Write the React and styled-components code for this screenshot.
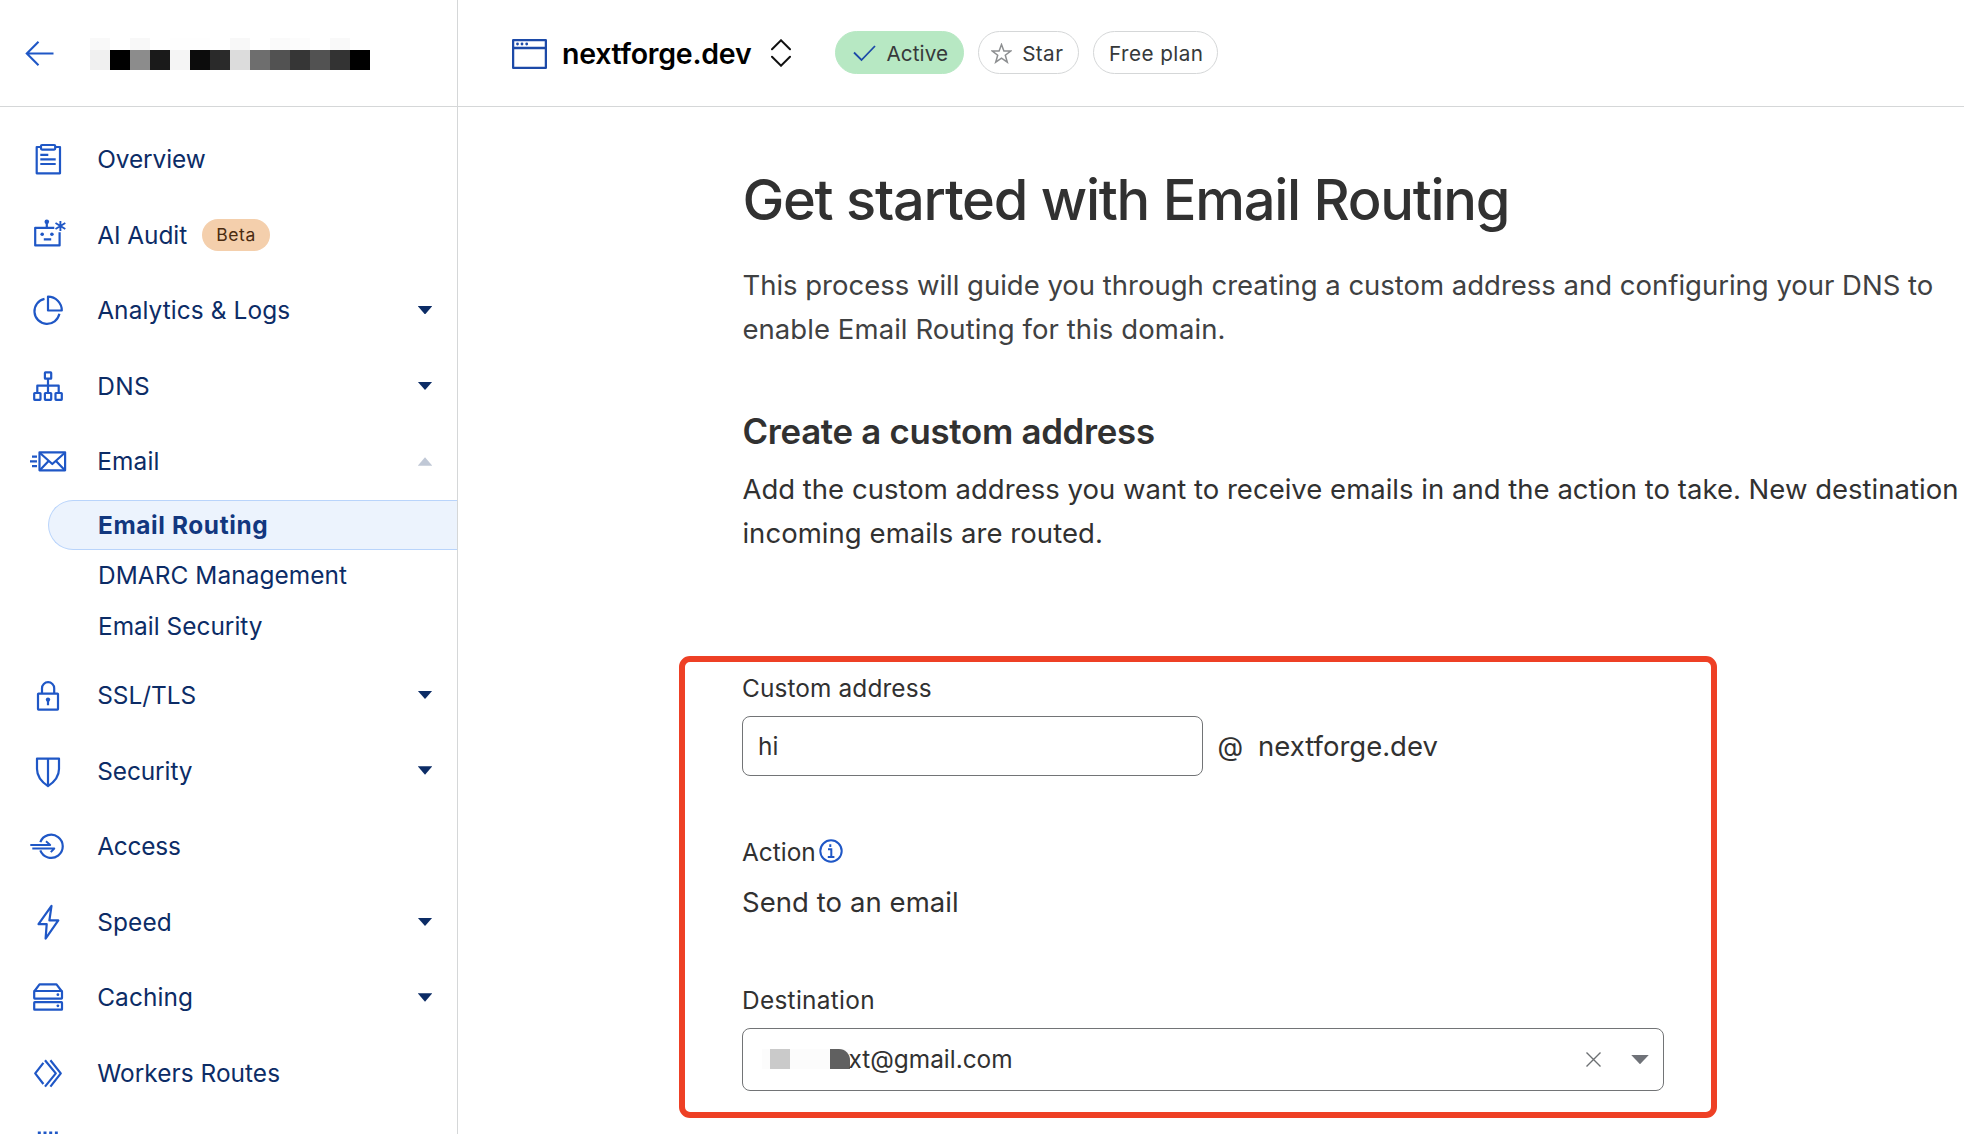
import React from "react";
import styled, { createGlobalStyle } from "styled-components";

const GlobalStyle = createGlobalStyle`
  *, *::before, *::after { box-sizing: border-box; }
  body {
    margin: 0;
    background: #fff;
    font-family: Inter, "Liberation Sans", sans-serif;
    color: #313131;
    overflow: hidden;
  }
  h1, h2, p { margin: 0; }
`;

const Shell = styled.div`
  display: flex;
  width: 1964px;
  height: 1134px;
  overflow: hidden;
`;

/* ---------- sidebar ---------- */

const Sidebar = styled.aside`
  display: flex;
  flex-direction: column;
  flex: 0 0 458px;
  border-right: 1px solid #d5d7d8;
  overflow: hidden;
`;

const AccountBar = styled.div`
  display: flex;
  flex: 0 0 107px;
  align-items: flex-start;
  gap: 36px;
  padding: 37.5px 0 0 24px;
  border-bottom: 1px solid #d5d7d8;
`;

const BackIcon = styled.svg`
  width: 30px;
  height: 30px;
  flex: none;
  fill: none;
  stroke: #1f57c6;
  stroke-width: 2.1;
`;

const Mosaic = styled.div`
  display: grid;
  grid-template-columns: repeat(14, 20px);
  grid-template-rows: 12.5px 20px;
`;

const MosaicCell = styled.span`
  background: ${(p) => p.$tone};
`;

const Nav = styled.nav`
  display: flex;
  flex-direction: column;
  padding-top: 14.1px;
`;

const NavRow = styled.div`
  display: flex;
  align-items: center;
  flex: none;
  height: 75.65px;
  padding: 0 24.7px 0 28px;
`;

const NavIcon = styled.svg`
  width: 40px;
  height: 40px;
  flex: none;
  margin-right: 29.2px;
  overflow: visible;
  fill: none;
  stroke: #1f57c6;
  stroke-width: 2.2;
  stroke-linejoin: round;
  .fill { fill: #1f57c6; stroke: none; }
`;

const NavLabel = styled.span`
  font-size: 24.4px;
  line-height: 32px;
  color: #0c2c66;
  white-space: nowrap;
  letter-spacing: ${(p) => p.$track || 0}px;
`;

const BetaTag = styled.span`
  margin-left: 15px;
  width: 68px;
  height: 32px;
  border-radius: 16px;
  background: #f4cfac;
  color: #4a2b10;
  font-size: 17.5px;
  line-height: 31px;
  letter-spacing: 0.6px;
  text-align: center;
`;

const Caret = styled.span`
  width: 14.6px;
  height: 8.4px;
  margin-left: auto;
  background: ${(p) => (p.$open ? "#c0c8d6" : "#0c2c66")};
  clip-path: ${(p) =>
    p.$open ? "polygon(0 100%, 50% 0, 100% 100%)" : "polygon(0 0, 100% 0, 50% 100%)"};
`;

const SubList = styled.div`
  display: flex;
  flex-direction: column;
  gap: 0.5px;
  padding: 0.4px 0 6.4px 48px;
`;

const SubItem = styled.div`
  height: 50px;
  padding-left: 49px;
  border: 1px solid ${(p) => (p.$active ? "#b9d4fb" : "transparent")};
  border-right: 0;
  border-radius: 25px 0 0 25px;
  background: ${(p) => (p.$active ? "#ecf3fd" : "transparent")};
  color: ${(p) => (p.$active ? "#12377f" : "#0c2c66")};
  font-size: 24.4px;
  font-weight: ${(p) => (p.$active ? 700 : 400)};
  line-height: 48px;
  white-space: nowrap;
  letter-spacing: ${(p) => p.$track || 0}px;
`;

/* ---------- main ---------- */

const Main = styled.main`
  display: flex;
  flex-direction: column;
  flex: 1;
  min-width: 0;
`;

const TopBar = styled.header`
  display: flex;
  align-items: center;
  flex: 0 0 107px;
  padding: 0 0 1px 54px;
  border-bottom: 1px solid #d5d7d8;
`;

const WindowIcon = styled.svg`
  width: 35px;
  height: 30px;
  flex: none;
  margin-top: 3px;
  fill: none;
  stroke: #1c4aa8;
  stroke-width: 2.3;
  .fill { fill: #1c4aa8; stroke: none; }
`;

const ZoneName = styled.span`
  margin: 2px 20px 0 15px;
  font-size: 28.5px;
  font-weight: 600;
  line-height: 36px;
  letter-spacing: -0.25px;
  color: #000;
`;

const SwitchIcon = styled.svg`
  width: 20px;
  height: 28px;
  flex: none;
  margin-right: 44px;
  fill: none;
  stroke: #111;
  stroke-width: 2;
  stroke-linecap: round;
`;

const Pills = styled.div`
  display: flex;
  gap: 14.3px;
`;

const Pill = styled.span`
  display: flex;
  align-items: center;
  width: ${(p) => p.$width}px;
  height: 43px;
  padding: 2px 0 0 ${(p) => p.$pad}px;
  border: 1px solid ${(p) => (p.$active ? "#b7e8c3" : "#d5d7d8")};
  border-radius: 22px;
  background: ${(p) => (p.$active ? "#b7e8c3" : "#fff")};
  font-size: 20.7px;
  line-height: 28px;
  white-space: nowrap;
  letter-spacing: ${(p) => p.$track || 0}px;
  color: #36393a;
  svg { flex: none; fill: none; margin: -1px 10px 0 0; }
`;

const Content = styled.div`
  display: flex;
  flex-direction: column;
  align-items: flex-start;
  padding: 58px 0 0 284.4px;
  white-space: nowrap;
`;

const Title = styled.h1`
  font-size: 56px;
  font-weight: 500;
  line-height: 70px;
  letter-spacing: -1.27px;
`;

const Intro = styled.p`
  margin-top: 29.3px;
  font-size: 27.5px;
  line-height: 43.5px;
  color: #3f4142;
`;

const SectionTitle = styled.h2`
  margin-top: 57.7px;
  font-size: 34.8px;
  font-weight: 600;
  line-height: 44px;
  letter-spacing: -0.28px;
`;

const SectionText = styled.p`
  margin-top: 14px;
  font-size: 27.5px;
  line-height: 44px;
`;

const Line = styled.span`
  display: block;
  letter-spacing: ${(p) => p.$track || 0}px;
`;

const FormPanel = styled.section`
  display: flex;
  flex-direction: column;
  width: 1038.4px;
  height: 462.4px;
  margin: 101px 0 0 -63.4px;
  padding: 10px 47px 0 57px;
  border: 6px solid #ee4025;
  border-radius: 11px;
`;

const Label = styled.div`
  display: flex;
  align-items: center;
  margin-top: ${(p) => p.$top || 0}px;
  font-size: 24.4px;
  line-height: 32px;
  letter-spacing: ${(p) => p.$track || 0}px;
`;

const InfoIcon = styled.svg`
  width: 24px;
  height: 24px;
  margin: -1px 0 0 3.5px;
  fill: none;
  stroke: #1f57c6;
  stroke-width: 2;
`;

const AddressRow = styled.div`
  display: flex;
  align-items: center;
  margin-top: 12px;
`;

const Field = styled.div`
  display: flex;
  align-items: center;
  width: ${(p) => p.$width}px;
  height: ${(p) => p.$height}px;
  padding-left: 15px;
  border: 1px solid #727476;
  border-radius: 8px;
  font-size: 24.4px;
  line-height: 32px;
`;

const AtSign = styled.span`
  width: 40.5px;
  margin-left: 14.5px;
  font-size: 26.5px;
  line-height: 40px;
`;

const Domain = styled.span`
  font-size: 27.5px;
  line-height: 40px;
`;

const ActionValue = styled.div`
  margin-top: 14px;
  font-size: 27.5px;
  line-height: 40px;
  letter-spacing: 0.06px;
`;

const SelectWrap = styled.div`
  margin-top: 12px;
`;

const MaskStrip = styled.span`
  display: flex;
  flex: none;
  gap: 40px;
  width: 88px;
  height: 20px;
  margin-left: 4px;
  padding-left: 8px;
  background: #fcfcfc;
`;

const MaskBlock = styled.span`
  flex: none;
  width: 20px;
  height: 20px;
  background: ${(p) => p.$tone};
  border-radius: ${(p) => (p.$rounded ? "0 11px 0 0" : 0)};
`;

const MaskedText = styled.span`
  margin-left: -1.5px;
`;

const ClearIcon = styled.svg`
  width: 15px;
  height: 15px;
  margin-left: auto;
  fill: none;
  stroke: #6d7073;
  stroke-width: 1.4;
`;

const SelectCaret = styled.span`
  width: 18px;
  height: 9.4px;
  margin: 0 14px 0 30.5px;
  background: #6f7278;
  clip-path: polygon(0 0, 100% 0, 50% 100%);
`;

/* ---------- icon artwork ---------- */

const art = {
  overview: (
    <>
      <path d="M12.5 8H8.7V34.3H32V8H28" />
      <rect x="13" y="6" width="14.2" height="4.6" rx="1" />
      <path d="M12.3 15.8h8M12.3 20.4h15.4M12.3 25h15.4" />
    </>
  ),
  ai: (
    <>
      <path d="M26.3 12.8H7.2V30.4H31.6V17.2" />
      <path d="M18.8 7v6M15.8 24.4h7.4" />
      <circle className="fill" cx="18.8" cy="6.8" r="2.3" />
      <circle className="fill" cx="14.2" cy="19.2" r="1.8" />
      <circle className="fill" cx="23.9" cy="19.2" r="1.8" />
      <path d="M32.4 6v10M27.5 8l9.8 6M37.3 8l-9.8 6" strokeWidth="1.9" />
    </>
  ),
  analytics: (
    <>
      <path d="M20 6.7V20.5H33.8A13.8 13.8 0 0 0 20 6.7Z" />
      <path d="M16.5 8.9A12.6 12.6 0 1 0 31.4 23.8" />
    </>
  ),
  dns: (
    <>
      <rect x="16.9" y="6.4" width="6.3" height="6.3" rx="0.5" />
      <rect x="6.2" y="27" width="6.3" height="6.8" rx="0.5" />
      <rect x="16.9" y="27" width="6.3" height="6.8" rx="0.5" />
      <rect x="27.5" y="27" width="6.3" height="6.8" rx="0.5" />
      <path d="M20 13v14M9.3 27v-7.3h21.4V27" />
    </>
  ),
  email: (
    <>
      <rect x="11.5" y="11.3" width="25.6" height="18" />
      <path d="M12 12l12.3 11L36.6 12M12 29l8.6-9M36.6 29L28 20" />
      <path d="M4 15.7h5M2 20.4h7M4 25.1h5" />
    </>
  ),
  ssl: (
    <>
      <rect x="10" y="18.6" width="20" height="16" rx="0.5" />
      <path d="M14 18.5v-5.2a6 6 0 0 1 12.2 0v5.2M20 25v5.2" />
      <circle className="fill" cx="20" cy="24.6" r="2.2" />
    </>
  ),
  security: (
    <>
      <path d="M9 7.6H31V18c0 8-5.5 13.5-11 17.2C14.5 31.5 9 26 9 18Z" />
      <path d="M20 7.6V35" />
    </>
  ),
  access: (
    <>
      <path d="M12.3 16.2A11.6 11.6 0 1 1 12.3 24.4" />
      <path d="M2.3 19H22.2L18 15.3M4.3 22.5H26.3L22.8 26.2" strokeWidth="1.9" />
    </>
  ),
  speed: <path d="M23.5 3.8L10.5 22.2H18.7L17.6 36.6L30.3 18.4H21.4Z" />,
  caching: (
    <>
      <path d="M6.2 14.5L11.5 7.4H28.5L33.9 14.5" />
      <rect x="6.2" y="14" width="27.8" height="7.6" rx="0.5" />
      <rect x="6.2" y="25.2" width="27.8" height="7.5" rx="0.5" />
      <circle className="fill" cx="29.9" cy="17.7" r="1.4" />
      <circle className="fill" cx="29.9" cy="28.8" r="1.4" />
    </>
  ),
  workers: (
    <>
      <path d="M15.4 9.8L7.2 20.4L15.4 31" />
      <path d="M17 7.3L27.8 20.4L17 33.6M22.4 7.3L32.8 20.4L22.4 33.6" />
    </>
  ),
  dots: <path d="M9.8 4h20" strokeWidth="3" strokeDasharray="3 2.7" />,
};

const topItems = [
  { icon: "overview", label: "Overview", track: -0.06 },
  { icon: "ai", label: "AI Audit", track: -0.05, beta: true },
  { icon: "analytics", label: "Analytics & Logs", track: 0.1, caret: true },
  { icon: "dns", label: "DNS", track: 0.4, caret: true },
  { icon: "email", label: "Email", track: 0.2, caret: true, open: true },
];

const emailItems = [
  { label: "Email Routing", active: true, track: 0.62 },
  { label: "DMARC Management", track: 0.08 },
  { label: "Email Security", track: 0.02 },
];

const bottomItems = [
  { icon: "ssl", label: "SSL/TLS", caret: true },
  { icon: "security", label: "Security", track: -0.08, caret: true },
  { icon: "access", label: "Access", track: -0.22 },
  { icon: "speed", label: "Speed", track: 0.15, caret: true },
  { icon: "caching", label: "Caching", track: 0.1, caret: true },
  { icon: "workers", label: "Workers Routes", track: 0.05 },
  { icon: "dots" },
];

const mosaicTones = [
  "#f9f9f9", "#fff", "#f8f8f8", "#fff", "#fefefe", "#fefefe", "#fff",
  "#f8f8f8", "#fff", "#fafafa", "#fcfcfc", "#fff", "#f9f9f9", "#fff",
  "#f0f0f0", "#000", "#8c8c8c", "#1a1a1a", "#f5f5f5", "#0c0c0c", "#2a2a2a",
  "#dcdcdc", "#6e6e6e", "#525252", "#363636", "#525252", "#333", "#000",
];

function NavItem({ item }) {
  return (
    <NavRow>
      <NavIcon viewBox="0 0 40 40">{art[item.icon]}</NavIcon>
      {item.label && <NavLabel $track={item.track}>{item.label}</NavLabel>}
      {item.beta && <BetaTag>Beta</BetaTag>}
      {item.caret && <Caret $open={item.open} />}
    </NavRow>
  );
}

export default function App() {
  return (
    <Shell>
      <GlobalStyle />
      <Sidebar>
        <AccountBar>
          <BackIcon viewBox="0 0 30 30">
            <path d="M29.5 15.5H3M14.5 3.8L2.8 15.5L14.5 27.2" />
          </BackIcon>
          <Mosaic>
            {mosaicTones.map((tone, i) => (
              <MosaicCell key={i} $tone={tone} />
            ))}
          </Mosaic>
        </AccountBar>
        <Nav>
          {topItems.map((item) => (
            <NavItem key={item.icon} item={item} />
          ))}
          <SubList>
            {emailItems.map((item) => (
              <SubItem key={item.label} $active={item.active} $track={item.track}>
                {item.label}
              </SubItem>
            ))}
          </SubList>
          {bottomItems.map((item) => (
            <NavItem key={item.icon} item={item} />
          ))}
        </Nav>
      </Sidebar>

      <Main>
        <TopBar>
          <WindowIcon viewBox="0 0 35 30">
            <rect x="1.1" y="1.1" width="32.8" height="27.8" rx="0.5" />
            <path d="M1 9h33" />
            <circle className="fill" cx="5.5" cy="5" r="1.4" />
            <circle className="fill" cx="10" cy="5" r="1.4" />
            <circle className="fill" cx="14.7" cy="5" r="1.4" />
          </WindowIcon>
          <ZoneName>nextforge.dev</ZoneName>
          <SwitchIcon viewBox="0 0 20 28">
            <path d="M1 10.3L10 1.3L19 10.3M1 17.7L10 26.7L19 17.7" />
          </SwitchIcon>
          <Pills>
            <Pill $active $width={128.5} $pad={17} $track={0.1}>
              <svg width="23" height="18" viewBox="0 0 23 18" stroke="#1c4aa8" strokeWidth="1.8">
                <path d="M1 8.500L8.500 16L22 2" />
              </svg>
              Active
            </Pill>
            <Pill $width={101} $pad={12} $track={0.4}>
              <svg width="21" height="21" viewBox="0 0 21 21" stroke="#8d8f91" strokeWidth="1.5">
                <path d="M10.5 1.5L12.9 8H19.7L14.3 12.2L16.3 19.2L10.5 15.1L4.7 19.2L6.7 12.2L1.3 8H8.1Z" />
              </svg>
              Star
            </Pill>
            <Pill $width={125} $pad={14.5} $track={0.45}>Free plan</Pill>
          </Pills>
        </TopBar>

        <Content>
          <Title>Get started with Email Routing</Title>
          <Intro>
            <Line $track={-0.01}>
              This process will guide you through creating a custom address and configuring your DNS to
            </Line>
            <Line $track={0.07}>enable Email Routing for this domain.</Line>
          </Intro>
          <SectionTitle>Create a custom address</SectionTitle>
          <SectionText>
            <Line $track={0.015}>
              Add the custom address you want to receive emails in and the action to take. New destination
            </Line>
            <Line $track={0.05}>incoming emails are routed.</Line>
          </SectionText>

          <FormPanel>
            <Label $track={0.12}>Custom address</Label>
            <AddressRow>
              <Field $width={461} $height={60}>hi</Field>
              <AtSign>@</AtSign>
              <Domain>nextforge.dev</Domain>
            </AddressRow>
            <Label $top={60}>
              Action
              <InfoIcon viewBox="0 0 24 24">
                <circle cx="12" cy="12" r="10.7" />
                <path d="M9 10.3h3.3v7.5M8.8 18h6.6M11.3 5.2v2.8" />
              </InfoIcon>
            </Label>
            <ActionValue>Send to an email</ActionValue>
            <Label $top={62} $track={0.3}>Destination</Label>
            <SelectWrap>
              <Field $width={922} $height={63}>
                <MaskStrip>
                  <MaskBlock $tone="#cacaca" />
                  <MaskBlock $tone="#606060" $rounded />
                </MaskStrip>
                <MaskedText>xt@gmail.com</MaskedText>
                <ClearIcon viewBox="0 0 15 15">
                  <path d="M0.5 0.5L14.5 14.5M14.5 0.5L0.5 14.5" />
                </ClearIcon>
                <SelectCaret />
              </Field>
            </SelectWrap>
          </FormPanel>
        </Content>
      </Main>
    </Shell>
  );
}
